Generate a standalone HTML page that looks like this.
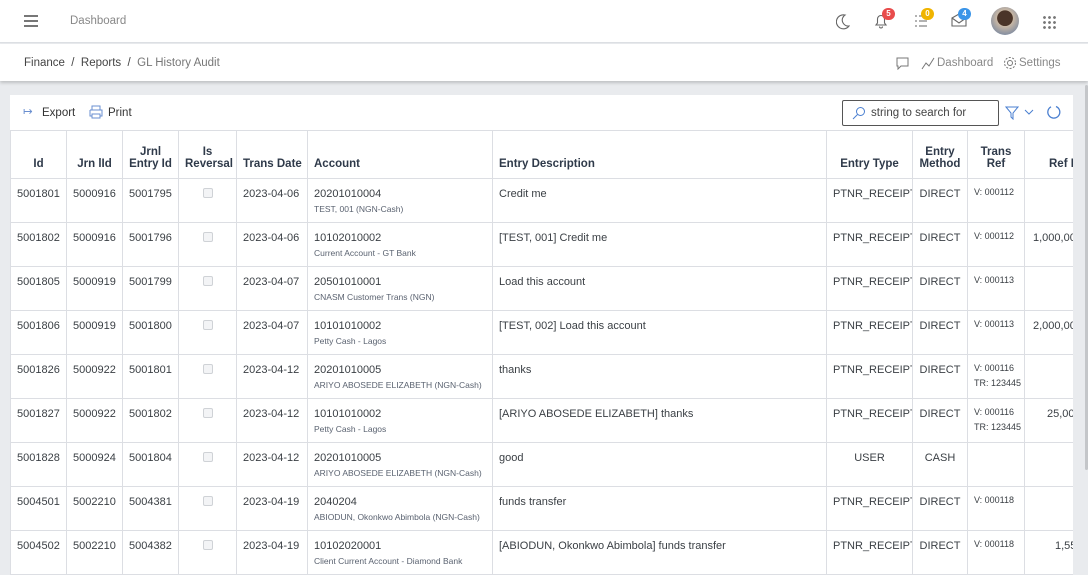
<!DOCTYPE html>
<html><head><meta charset="utf-8"><style>
*{box-sizing:border-box;margin:0;padding:0}
body{width:1088px;height:568px;overflow:hidden;background:#e9ebee;font-family:"Liberation Sans",sans-serif;color:#3a3f44;font-size:11.5px;position:relative}
.top{position:absolute;left:0;top:0;width:1088px;height:43px;background:#fff;border-bottom:1px solid #dcdfe3}
.crumb{position:absolute;left:0;top:44px;width:1088px;height:37px;background:#fff;box-shadow:0 2px 3px rgba(0,0,0,.18)}
.card{position:absolute;left:10px;top:95px;width:1063px;height:480px;background:#fff;overflow:hidden}
table{position:absolute;left:0;top:35px;border-collapse:collapse;table-layout:fixed;width:1120px}
td,th{border:1px solid #dcdee3;vertical-align:top;padding:9px 6px 0 6px;height:44px;white-space:nowrap;overflow:hidden;font-size:11px}
th{height:48px;vertical-align:bottom;padding-bottom:8px;font-weight:bold;color:#2f3a4a;text-align:center;font-size:11.5px}
th.l{text-align:left}
td.c{text-align:center}
small{display:block;font-size:8.5px;color:#5a6270;margin-top:4px}
.tr{font-size:9px;line-height:15px;padding-top:6px}
.cb{display:inline-block;width:10px;height:10px;border:1px solid #cfd2d6;border-radius:2px;background:#f3f4f6}
.badge{position:absolute;width:13px;height:12px;border-radius:6px;color:#fff;font-size:8px;font-weight:bold;text-align:center;line-height:12px}
</style></head><body>
<div class="top">
 <div style="position:absolute;left:24px;top:15px;width:14px;height:2px;background:#777;box-shadow:0 5px 0 #777,0 10px 0 #777"></div>
 <div style="position:absolute;left:70px;top:15px;color:#888;font-size:11.5px">Dashboard</div>
 <svg style="position:absolute;left:836px;top:14px" width="14" height="16" viewBox="0 0 14 16"><path d="M9 1a7 7 0 1 0 4 11A6 6 0 0 1 9 1z" fill="none" stroke="#666" stroke-width="1.1"/></svg>
 <svg style="position:absolute;left:874px;top:13px" width="14" height="16" viewBox="0 0 14 16"><path d="M2 12h10l-1.5-2V6a3.5 3.5 0 0 0-7 0v4z M5.5 13.5a1.5 1.5 0 0 0 3 0" fill="none" stroke="#666" stroke-width="1.1"/></svg>
 <div class="badge" style="left:882px;top:8px;background:#e84c4c">5</div>
 <svg style="position:absolute;left:914px;top:14px" width="14" height="14" viewBox="0 0 14 14"><path d="M1 2h2M1 7h2M1 12h2M5 2h8M5 7h8M5 12h8" stroke="#666" stroke-width="1.1"/></svg>
 <div class="badge" style="left:921px;top:8px;background:#f0b400">0</div>
 <svg style="position:absolute;left:951px;top:13px" width="16" height="14" viewBox="0 0 16 14"><path d="M1 5l7-4 7 4v8H1z M1 5l7 5 7-5" fill="none" stroke="#666" stroke-width="1.1"/></svg>
 <div class="badge" style="left:958px;top:8px;background:#3b95e8">4</div>
 <div style="position:absolute;left:991px;top:7px;width:28px;height:28px;border-radius:50%;background:radial-gradient(circle at 50% 40%,#4a3428 35%,#c9b8a5 37%,#7d8aa0 80%)"></div>
 <div style="position:absolute;left:1042px;top:15px;width:14px;height:14px;background:radial-gradient(circle,#777 1.2px,transparent 1.6px) 0 0/5px 5px"></div>
</div>
<div class="crumb">
 <div style="position:absolute;left:24px;top:13px;color:#444">Finance &nbsp;/&nbsp; Reports &nbsp;/&nbsp; <span style="color:#777">GL History Audit</span></div>
 <svg style="position:absolute;left:896px;top:13px" width="13" height="13" viewBox="0 0 13 13"><path d="M1 1h11v8H5l-3 3V9H1z" fill="none" stroke="#777"/></svg>
 <svg style="position:absolute;left:921px;top:12px" width="14" height="14" viewBox="0 0 14 14"><path d="M1 13l4-6 3 3 5-8" fill="none" stroke="#777"/></svg>
 <div style="position:absolute;left:937px;top:13px;color:#888">Dashboard</div>
 <svg style="position:absolute;left:1003px;top:12px" width="14" height="14" viewBox="0 0 14 14"><circle cx="7" cy="7" r="2.5" fill="none" stroke="#777"/><circle cx="7" cy="7" r="5.5" fill="none" stroke="#777" stroke-dasharray="2 1.5"/></svg>
 <div style="position:absolute;left:1019px;top:13px;color:#888">Settings</div>
</div>
<div class="card">
 <div style="position:absolute;left:13px;top:9px;color:#6a8fd0">&#x21A6;</div>
 <div style="position:absolute;left:32px;top:12px;color:#333">Export</div>
 <svg style="position:absolute;left:79px;top:10px" width="14" height="14" viewBox="0 0 14 14"><path d="M3 5V1h8v4M1 5h12v6h-2M3 11H1V5M3 9h8v4H3z" fill="none" stroke="#6a8fd0"/></svg>
 <div style="position:absolute;left:98px;top:12px;color:#333">Print</div>
 <div style="position:absolute;left:832px;top:5px;width:157px;height:26px;border:1px solid #555;border-radius:2px"></div>
 <svg style="position:absolute;left:842px;top:11px" width="14" height="14" viewBox="0 0 14 14"><circle cx="8.5" cy="5.5" r="4" fill="none" stroke="#4a7fd0"/><path d="M5.5 8.5L1 13" stroke="#4a7fd0"/></svg>
 <div style="position:absolute;left:861px;top:12px;color:#444">string to search for</div>
 <svg style="position:absolute;left:995px;top:11px" width="14" height="14" viewBox="0 0 14 14"><path d="M1 1h12L8 7v6L6 11V7z" fill="none" stroke="#4a7fd0"/></svg>
 <svg style="position:absolute;left:1014px;top:13px" width="10" height="8" viewBox="0 0 10 8"><path d="M1 2l4 4 4-4" fill="none" stroke="#4a7fd0"/></svg>
 <svg style="position:absolute;left:1036px;top:9px" width="16" height="16" viewBox="0 0 16 16"><path d="M10 2.5A6 6 0 1 1 5 2.8" fill="none" stroke="#4a7fd0" stroke-width="1.3"/></svg>
 <table>
 <colgroup><col style="width:56px"><col style="width:56px"><col style="width:56px"><col style="width:58px"><col style="width:71px"><col style="width:185px"><col style="width:334px"><col style="width:86px"><col style="width:55px"><col style="width:57px"><col style="width:106px"></colgroup>
 <tr><th>Id</th><th>Jrn lId</th><th>Jrnl<br>Entry Id</th><th>Is<br>Reversal</th><th>Trans Date</th><th class="l">Account</th><th class="l">Entry Description</th><th>Entry Type</th><th>Entry<br>Method</th><th>Trans<br>Ref</th><th class="l" style="padding-left:24px">Ref D</th></tr>
 <tr><td>5001801</td><td>5000916</td><td>5001795</td><td class="c"><span class="cb"></span></td><td>2023-04-06</td><td>20201010004<small>TEST, 001 (NGN-Cash)</small></td><td>Credit me</td><td class="c">PTNR_RECEIPT</td><td class="c">DIRECT</td><td class="tr">V: 000112</td><td></td></tr>
 <tr><td>5001802</td><td>5000916</td><td>5001796</td><td class="c"><span class="cb"></span></td><td>2023-04-06</td><td>10102010002<small>Current Account - GT Bank</small></td><td>[TEST, 001] Credit me</td><td class="c">PTNR_RECEIPT</td><td class="c">DIRECT</td><td class="tr">V: 000112</td><td style="padding-left:8px">1,000,00</td></tr>
 <tr><td>5001805</td><td>5000919</td><td>5001799</td><td class="c"><span class="cb"></span></td><td>2023-04-07</td><td>20501010001<small>CNASM Customer Trans (NGN)</small></td><td>Load this account</td><td class="c">PTNR_RECEIPT</td><td class="c">DIRECT</td><td class="tr">V: 000113</td><td></td></tr>
 <tr><td>5001806</td><td>5000919</td><td>5001800</td><td class="c"><span class="cb"></span></td><td>2023-04-07</td><td>10101010002<small>Petty Cash - Lagos</small></td><td>[TEST, 002] Load this account</td><td class="c">PTNR_RECEIPT</td><td class="c">DIRECT</td><td class="tr">V: 000113</td><td style="padding-left:8px">2,000,00</td></tr>
 <tr><td>5001826</td><td>5000922</td><td>5001801</td><td class="c"><span class="cb"></span></td><td>2023-04-12</td><td>20201010005<small>ARIYO ABOSEDE ELIZABETH (NGN-Cash)</small></td><td>thanks</td><td class="c">PTNR_RECEIPT</td><td class="c">DIRECT</td><td class="tr">V: 000116<br>TR: 123445</td><td></td></tr>
 <tr><td>5001827</td><td>5000922</td><td>5001802</td><td class="c"><span class="cb"></span></td><td>2023-04-12</td><td>10101010002<small>Petty Cash - Lagos</small></td><td>[ARIYO ABOSEDE ELIZABETH] thanks</td><td class="c">PTNR_RECEIPT</td><td class="c">DIRECT</td><td class="tr">V: 000116<br>TR: 123445</td><td style="padding-left:22px">25,00</td></tr>
 <tr><td>5001828</td><td>5000924</td><td>5001804</td><td class="c"><span class="cb"></span></td><td>2023-04-12</td><td>20201010005<small>ARIYO ABOSEDE ELIZABETH (NGN-Cash)</small></td><td>good</td><td class="c">USER</td><td class="c">CASH</td><td class="tr"></td><td></td></tr>
 <tr><td>5004501</td><td>5002210</td><td>5004381</td><td class="c"><span class="cb"></span></td><td>2023-04-19</td><td>2040204<small>ABIODUN, Okonkwo Abimbola (NGN-Cash)</small></td><td>funds transfer</td><td class="c">PTNR_RECEIPT</td><td class="c">DIRECT</td><td class="tr">V: 000118</td><td></td></tr>
 <tr><td>5004502</td><td>5002210</td><td>5004382</td><td class="c"><span class="cb"></span></td><td>2023-04-19</td><td>10102020001<small>Client Current Account - Diamond Bank</small></td><td>[ABIODUN, Okonkwo Abimbola] funds transfer</td><td class="c">PTNR_RECEIPT</td><td class="c">DIRECT</td><td class="tr">V: 000118</td><td style="padding-left:30px">1,55</td></tr>
 </table>
</div>
<div style="position:absolute;left:1085px;top:85px;width:3px;height:385px;background:#c4c6c9;border-radius:2px"></div>
</body></html>
